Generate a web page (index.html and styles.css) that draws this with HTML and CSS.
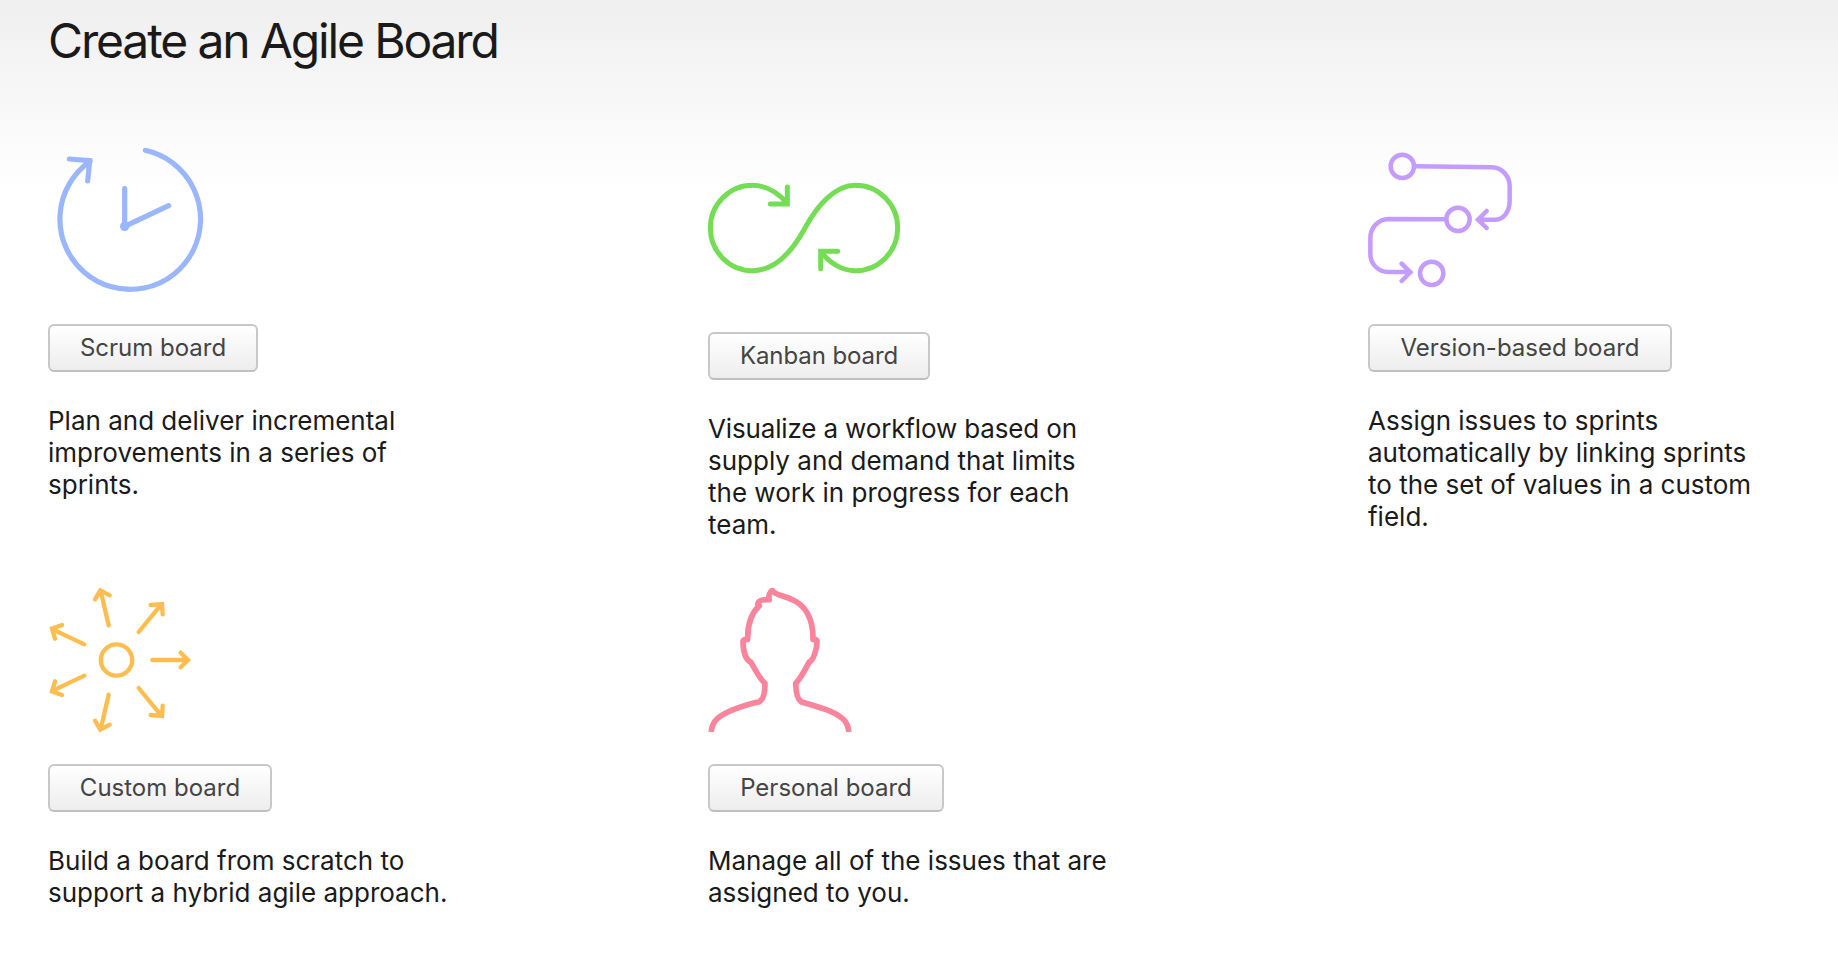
FILE: index.html
```html
<!DOCTYPE html>
<html lang="en">
<head>
<meta charset="utf-8">
<title>Create an Agile Board</title>
<link rel="stylesheet" href="styles.css">
</head>
<body>
<main class="page">
  <h1 class="title">Create an Agile Board</h1>
  <div class="boards">
    <section class="board board-scrum">
      <svg class="icon icon-scrum" viewBox="24 54 504 432">
        <path d="M316 61A211 211 0 1 1 150 94"/>
        <path d="M88 87L149 92L143 153M254 176V289L386 227"/>
        <circle class="dot" cx="254" cy="289" r="14"/>
      </svg>
      <button class="button">Scrum board</button>
      <p class="text">Plan and deliver incremental<br>improvements in a series of<br>sprints.</p>
    </section>
    <section class="board board-kanban">
      <svg class="icon icon-kanban" viewBox="54 -36 576 456">
        <path d="M290 128C262 96 226 76 188 76A127 128 0 0 0 188 332C256 332 308 272 345 204C382 136 435 76 496 76A127 128 0 0 1 496 332C460 332 420 312 394 276"/>
        <path d="M241 132H292V81M443 274H392V326"/>
      </svg>
      <button class="button">Kanban board</button>
      <p class="text"><span class="tight">Visualize a workflow based on</span><br>supply and demand that limits<br>the work in progress for each<br>team.</p>
    </section>
    <section class="board board-version">
      <svg class="icon icon-version" viewBox="54 54 432 432">
        <circle cx="157" cy="109" r="35"/>
        <circle cx="324" cy="268" r="35"/>
        <circle cx="245" cy="430" r="35"/>
        <path d="M197 109L425 112C455 112 479 138 479 168V213C479 243 462 269 436 269H388M410 243L384 269L410 294"/>
        <path d="M288 268L115 267C85 268 61 292 61 325V372C61 402 85 426 115 426H178M155 401L181 427L155 453"/>
      </svg>
      <button class="button">Version-based board</button>
      <p class="text">Assign issues to sprints<br>automatically by linking sprints<br>to the set of values in a custom<br>field.</p>
    </section>
    <section class="board board-custom">
      <svg class="icon icon-custom" viewBox="54 54 432 432">
        <circle cx="259.500" cy="270" r="47"/>
        <path d="M367 270H472M452 248L474 270L452 292"/>
        <path d="M326 186L394 103M362 105L396 102L398 133"/>
        <path d="M236 166L212 63M195 88L211 61L239 76"/>
        <path d="M163 223L68 178M96 165L66 176L75 206"/>
        <path d="M326 354L394 437M362 435L396 438L398 407"/>
        <path d="M236 374L212 477M195 452L211 479L239 464"/>
        <path d="M163 317L68 362M96 375L66 364L75 334"/>
      </svg>
      <button class="button">Custom board</button>
      <p class="text">Build a board from scratch to<br>support a hybrid agile approach.</p>
    </section>
    <section class="board board-personal">
      <svg class="icon icon-personal" viewBox="54 54 432 432">
        <path d="M63 486C65 474 66 466 74 454C92 430 150 408 208 395C222 389 225 365 225 340C210 328 196 300 183 277C168 270 159 245 159 213Q160 208 173 208C172 165 182 132 208 107L203 103C204 92 218 88 238 89C234 77 240 66 247 61C255 76 280 76 305 88C345 104 370 145 369 208Q381 208 381 213C381 240 370 270 357 277C345 300 330 328 317 340C318 370 322 388 333 395C390 412 440 424 466 454C474 466 475 474 477 486"/>
      </svg>
      <button class="button">Personal board</button>
      <p class="text">Manage all of the issues that are<br>assigned to you.</p>
    </section>
  </div>
</main>
</body>
</html>
```
FILE: styles.css
```css
* { box-sizing: border-box; }
body {
  margin: 0;
  background: #fff;
  color: #1a1a1a;
  font-family: Inter, Roboto, sans-serif;
}
.page {
  min-height: 960px;
  padding: 11px 48px 0;
  background: linear-gradient(#efefef, #fff 192px);
}
.title {
  margin: 0 0 77px;
  font-size: 48px;
  line-height: 60px;
  font-weight: 400;
  letter-spacing: -2.15px;
}
.boards {
  display: grid;
  grid-template-columns: 660px 660px 1fr;
  row-gap: 48px;
}
.board {
  display: flex;
  flex-direction: column;
  align-items: flex-start;
}
.icon {
  display: block;
  width: 144px;
  height: 144px;
  margin-bottom: 32px;
  fill: none;
  stroke-linecap: round;
  overflow: visible;
}
.icon-scrum { width: 168px; stroke: #9ab6ff; stroke-width: 15.5; }
.icon-scrum .dot { fill: #9ab6ff; stroke: none; }
.icon-kanban { width: 192px; height: 152px; stroke: #74dd55; stroke-width: 15; }
.icon-version { stroke: #c49cff; stroke-width: 13.5; }
.icon-custom { stroke: #ffbd50; stroke-width: 13; }
.icon-personal {
  stroke: #fa849b;
  stroke-width: 17;
  stroke-linecap: butt;
  stroke-linejoin: round;
  overflow: hidden;
}
.button {
  height: 48px;
  padding: 0;
  border: 2px solid #c8c8c8;
  border-bottom-color: #bfbfbf;
  border-radius: 6px;
  background: linear-gradient(#fff, #ededed);
  color: #444;
  font: 400 24px/44px Inter, Roboto, sans-serif;
  white-space: nowrap;
}
.board-scrum .button { width: 210px; }
.board-kanban .button { width: 222px; letter-spacing: -0.1px; }
.board-version .button { width: 304px; }
.board-custom .button { width: 224px; }
.board-personal .button { width: 236px; }
.text {
  margin: 33px 0 -1px;
  font-size: 26px;
  line-height: 32px;
  white-space: nowrap;
}
.tight { letter-spacing: -0.15px; }
```
